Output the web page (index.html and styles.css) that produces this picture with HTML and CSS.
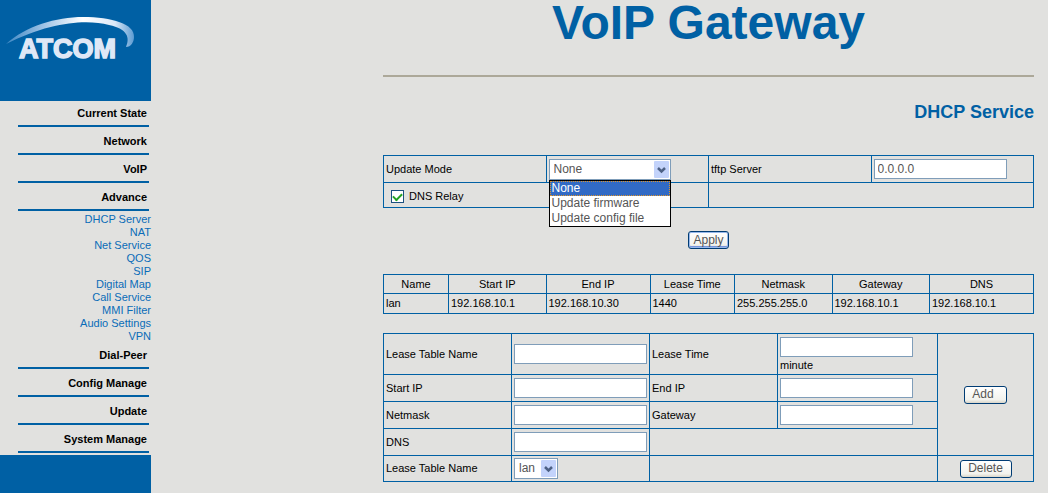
FILE: index.html
```html
<!DOCTYPE html>
<html lang="en">
<head>
<meta charset="utf-8">
<title>VoIP Gateway</title>
<link rel="stylesheet" href="styles.css">
</head>
<body>
<div class="shell">
  <aside class="sidebar">
    <div class="brand">
      <svg class="logo" viewBox="0 0 151 101" role="img" aria-label="ATCOM">
        <defs>
          <linearGradient id="swoosh" x1="0" x2="1" y1="0" y2="0">
            <stop offset="0" stop-color="#3f88c4"/>
            <stop offset="0.3" stop-color="#a0c4e6"/>
            <stop offset="0.6" stop-color="#ffffff"/>
            <stop offset="0.85" stop-color="#dbe8f7"/>
            <stop offset="1" stop-color="#5c9bd2"/>
          </linearGradient>
        </defs>
        <path fill="url(#swoosh)" d="M6 44 C26 26 56 17 83 17 C112 17 135 24 134 37 C134 42 131 47 126 47 C130 38 128 29 109 25 C86 19 50 22 6 44 Z"/>
        <text class="logo-text" x="19" y="58">ATCOM</text>
      </svg>
    </div>
    <nav>
      <ul class="menu">
        <li><a class="menu-link" href="#">Current State</a></li>
        <li><a class="menu-link" href="#">Network</a></li>
        <li><a class="menu-link" href="#">VoIP</a></li>
        <li><a class="menu-link" href="#">Advance</a>
          <ul class="submenu">
            <li><a href="#">DHCP Server</a></li>
            <li><a href="#">NAT</a></li>
            <li><a href="#">Net Service</a></li>
            <li><a href="#">QOS</a></li>
            <li><a href="#">SIP</a></li>
            <li><a href="#">Digital Map</a></li>
            <li><a href="#">Call Service</a></li>
            <li><a href="#">MMI Filter</a></li>
            <li><a href="#">Audio Settings</a></li>
            <li><a href="#">VPN</a></li>
          </ul>
        </li>
        <li><a class="menu-link" href="#">Dial-Peer</a></li>
        <li><a class="menu-link" href="#">Config Manage</a></li>
        <li><a class="menu-link" href="#">Update</a></li>
        <li><a class="menu-link" href="#">System Manage</a></li>
      </ul>
    </nav>
    <div class="sidebar-foot"></div>
  </aside>

  <main class="main">
    <h1>VoIP Gateway</h1>
    <h2>DHCP Service</h2>

    <form>
      <table class="grid mode">
        <tr>
          <td><label for="mode">Update Mode</label></td>
          <td>
            <div class="picker picker-wide">
              <select id="mode">
                <option>None</option>
                <option>Update firmware</option>
                <option>Update config file</option>
              </select>
              <svg class="arrow" viewBox="0 0 15 17" aria-hidden="true"><rect width="15" height="17" rx="1"/><path d="M4 7 L7.500 10.500 L11 7"/></svg>
              <ul class="options" role="listbox" aria-label="Update Mode">
                <li role="option" aria-selected="true">None</li>
                <li role="option" aria-selected="false">Update firmware</li>
                <li role="option" aria-selected="false">Update config file</li>
              </ul>
            </div>
          </td>
          <td><label for="tftp">tftp Server</label></td>
          <td><input class="text" id="tftp" type="text" value="0.0.0.0"></td>
        </tr>
        <tr class="relay">
          <td colspan="2"><label class="check"><input type="checkbox" checked>DNS Relay</label></td>
          <td colspan="2"></td>
        </tr>
      </table>
      <div class="actions"><button class="button default" type="button">Apply</button></div>
    </form>

    <table class="grid leases">
      <colgroup><col class="w10"><col class="w15"><col class="w16"><col class="w13"><col class="w15"><col class="w15"><col class="w16"></colgroup>
      <tr><th>Name</th><th>Start IP</th><th>End IP</th><th>Lease Time</th><th>Netmask</th><th>Gateway</th><th>DNS</th></tr>
      <tr><td>lan</td><td>192.168.10.1</td><td>192.168.10.30</td><td>1440</td><td>255.255.255.0</td><td>192.168.10.1</td><td>192.168.10.1</td></tr>
    </table>

    <form>
      <table class="grid editor">
        <colgroup><col class="label-col"><col class="field-col"><col class="label-col"><col class="wide-col"><col></colgroup>
        <tr>
          <td><label for="lease-name">Lease Table Name</label></td>
          <td><input class="text" id="lease-name" type="text"></td>
          <td><label for="lease-time">Lease Time</label></td>
          <td class="stacked"><input class="text" id="lease-time" type="text"><span>minute</span></td>
          <td class="center" rowspan="4"><button class="button add" type="button">Add</button></td>
        </tr>
        <tr>
          <td><label for="start-ip">Start IP</label></td>
          <td><input class="text" id="start-ip" type="text"></td>
          <td><label for="end-ip">End IP</label></td>
          <td><input class="text" id="end-ip" type="text"></td>
        </tr>
        <tr>
          <td><label for="netmask">Netmask</label></td>
          <td><input class="text" id="netmask" type="text"></td>
          <td><label for="gateway">Gateway</label></td>
          <td><input class="text" id="gateway" type="text"></td>
        </tr>
        <tr>
          <td><label for="dns">DNS</label></td>
          <td><input class="text" id="dns" type="text"></td>
          <td colspan="2"></td>
        </tr>
        <tr class="remove">
          <td><label for="lease-pick">Lease Table Name</label></td>
          <td>
            <div class="picker picker-small">
              <select id="lease-pick"><option>lan</option></select>
              <svg class="arrow" viewBox="0 0 15 17" aria-hidden="true"><rect width="15" height="17" rx="1"/><path d="M4 7 L7.500 10.500 L11 7"/></svg>
            </div>
          </td>
          <td colspan="2"></td>
          <td class="center"><button class="button delete" type="button">Delete</button></td>
        </tr>
      </table>
    </form>
  </main>
</div>
</body>
</html>
```

FILE: styles.css
```css
* { box-sizing: border-box; }

body {
  margin: 0;
  background: #e1e1df;
  color: #000;
  font: 11px/13px "Liberation Sans", Arial, sans-serif;
}

ul { list-style: none; margin: 0; padding: 0; }
a { text-decoration: none; }

.shell { display: flex; min-height: 100vh; }

/* Sidebar */
.sidebar {
  flex: none;
  width: 151px;
  display: flex;
  flex-direction: column;
  text-align: right;
}
.brand { background: #0060a4; }
.logo { display: block; width: 100%; }
.logo-text {
  font-size: 27px;
  font-weight: bold;
  fill: #dfe8f6;
  stroke: #dfe8f6;
  stroke-width: 1.5;
}
.menu > li + li { margin-top: 2px; }
.menu-link {
  display: block;
  margin: 0 2px 0 18px;
  padding-right: 2px;
  border-bottom: 2px solid #0060a4;
  color: #000;
  font-weight: bold;
  line-height: 24px;
}
.submenu { margin: 2px 0 -2px; }
.submenu a { display: block; color: #0a6cb8; }
.sidebar-foot { flex: 1; margin-top: 2px; background: #0060a4; }

/* Main column */
.main { flex: 1; min-width: 0; padding: 0 14px 11px 232px; }
h1 {
  margin: 0;
  padding-bottom: 29px;
  border-bottom: 2px solid #aca899;
  color: #0060a4;
  font-size: 48px;
  line-height: 46px;
  text-align: center;
}
h2 {
  margin: 24px 0 32px;
  color: #0060a4;
  font-size: 18px;
  line-height: 22px;
  text-align: right;
}

.grid {
  width: 100%;
  border-collapse: collapse;
  table-layout: fixed;
}
.grid td, .grid th {
  height: 27px;
  padding: 0 2px;
  border: 1px solid #0060a4;
  font-weight: normal;
  text-align: left;
  vertical-align: middle;
}
.grid .relay td { height: 25px; padding-top: 3px; }
.grid .remove td { height: 26px; }
.grid .center, .leases th { text-align: center; }
.leases { margin-bottom: 19px; }
.leases th { height: 19px; }
.leases td { height: 20px; }
.w10 { width: 10%; }
.w13 { width: 13%; }
.w15 { width: 15%; }
.w16 { width: 16%; }
.label-col { width: 128px; }
.field-col { width: 138px; }
.wide-col { width: 160px; }

.actions { display: flex; justify-content: center; padding: 23px 0 25px; }

/* Controls */
.text, select, .button, .options {
  color: #555;
  font: 12px/15px "Liberation Sans", Arial, sans-serif;
}
.text {
  display: block;
  width: 133px;
  height: 20px;
  max-width: 100%;
  padding: 1px 3px;
  border: 1px solid #7f9db9;
  background: #fff;
}
.grid .stacked { height: 41px; }
.stacked span { display: block; margin-top: 2px; }

.picker { position: relative; height: 21px; }
.picker-wide { width: 122px; }
.picker-small { width: 44px; }
.picker select {
  appearance: none;
  display: block;
  width: 100%;
  height: 100%;
  padding: 0 4px;
  border: 1px solid #7f9db9;
  border-radius: 0;
  background: #fff;
}
.arrow {
  position: absolute;
  top: 2px;
  right: 2px;
  width: 15px;
  height: 17px;
  pointer-events: none;
}
.arrow rect { fill: #c3d3fb; }
.arrow path { fill: none; stroke: #4d6185; stroke-width: 2.5; }
.options {
  position: absolute;
  z-index: 1;
  top: 100%;
  left: 0;
  width: 100%;
  border: 1px solid #000;
  background: #fff;
}
.options li { padding: 0 2px; }
.options [aria-selected="true"] {
  background: #316ac5;
  color: #fff;
  outline: 1px dotted #e0952a;
  outline-offset: -1px;
}

.check { display: flex; align-items: center; gap: 5px; padding-left: 5px; }
.check input {
  appearance: none;
  width: 13px;
  height: 13px;
  margin: 0;
  border: 1px solid #1c5180;
  background: #fff;
  display: grid;
  place-items: center;
}
.check input:checked::before {
  content: "";
  width: 7px;
  height: 4px;
  margin-bottom: 2px;
  border: solid #21a121;
  border-width: 0 0 2px 2px;
  transform: rotate(-45deg);
}

.button {
  height: 18px;
  padding: 0;
  border: 1px solid #003c74;
  border-radius: 3px;
  background: linear-gradient(#fff, #f2f2ed 80%, #d9d5c9);
}
.default { width: 41px; box-shadow: inset 0 0 0 1px #98b8ea, inset 0 -2px 0 #7694dc; }
.add { width: 43px; padding-right: 5px; }
.delete { width: 52px; }
```
